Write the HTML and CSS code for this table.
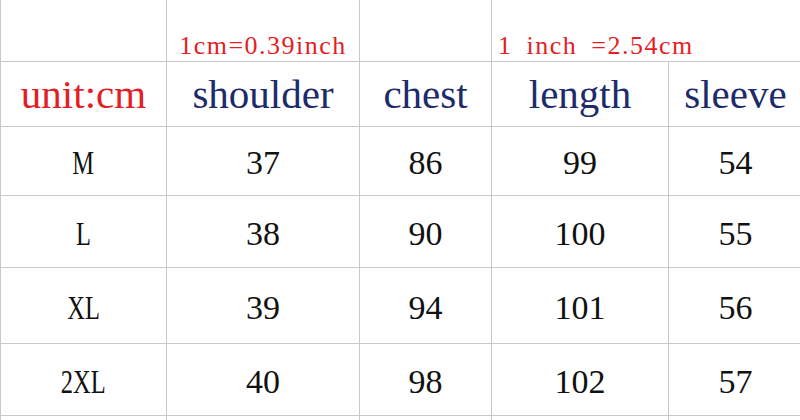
FILE: index.html
```html
<!DOCTYPE html>
<html>
<head>
<meta charset="utf-8">
<link rel="stylesheet" href="styles.css">
</head>
<body>
<div class="chart">
  <div class="cell"></div>
  <div class="cell note">1cm=0.39inch</div>
  <div class="cell"></div>
  <div class="cell note note-left span2">1 inch =2.54cm</div>

  <div class="cell head unit">unit:cm</div>
  <div class="cell head">shoulder</div>
  <div class="cell head">chest</div>
  <div class="cell head">length</div>
  <div class="cell head">sleeve</div>

  <div class="cell size"><span class="squeeze">M</span></div>
  <div class="cell num">37</div>
  <div class="cell num">86</div>
  <div class="cell num">99</div>
  <div class="cell num">54</div>

  <div class="cell size"><span class="squeeze">L</span></div>
  <div class="cell num">38</div>
  <div class="cell num">90</div>
  <div class="cell num">100</div>
  <div class="cell num">55</div>

  <div class="cell size"><span class="squeeze">XL</span></div>
  <div class="cell num">39</div>
  <div class="cell num">94</div>
  <div class="cell num">101</div>
  <div class="cell num">56</div>

  <div class="cell size"><span class="squeeze">2XL</span></div>
  <div class="cell num">40</div>
  <div class="cell num">98</div>
  <div class="cell num">102</div>
  <div class="cell num">57</div>

  <div class="cell"></div>
  <div class="cell"></div>
  <div class="cell"></div>
  <div class="cell"></div>
  <div class="cell"></div>
</div>
</body>
</html>
```
FILE: styles.css
```css
html, body {
  margin: 0;
  padding: 0;
  background: #ffffff;
  overflow: hidden;
  width: 800px;
  height: 420px;
}

.chart {
  display: grid;
  grid-template-columns: 166px 193px 132px 177px 134px;
  grid-template-rows: 62px 65px 69px 72px 76px 72px 40px;
  width: 802px;
  border-left: 1px solid #c8c8c8;
}

.cell {
  box-sizing: border-box;
  border-right: 1px solid #c8c8c8;
  border-bottom: 1px solid #c8c8c8;
  display: flex;
  align-items: center;
  justify-content: center;
  white-space: nowrap;
  overflow: visible;
}

.span2 {
  grid-column: span 2;
}

.note {
  align-items: flex-end;
  font-family: "Liberation Serif", serif;
  font-size: 26px;
  line-height: 26px;
  letter-spacing: 1.5px;
  color: #e31e25;
  padding-bottom: 2px;
}

.note-left {
  justify-content: flex-start;
  padding-left: 6px;
  word-spacing: 6px;
}

.head {
  font-family: "Liberation Serif", serif;
  font-size: 41px;
  line-height: 41px;
  color: #1d2b6b;
}

.unit {
  color: #e31e25;
}

.size,
.num {
  font-family: "Liberation Serif", serif;
  font-size: 34px;
  line-height: 34px;
  color: #111111;
  padding-top: 4px;
}

.squeeze {
  display: inline-block;
  transform: scaleX(0.72);
}
```
